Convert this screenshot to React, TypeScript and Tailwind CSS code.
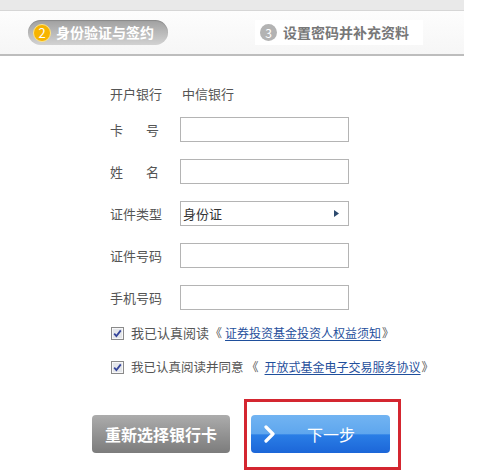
import React from "react";

const FONT = { fontFamily: '"Noto Sans CJK SC", "Noto Sans", sans-serif' };

function Checkbox() {
  return (
    <svg width="13" height="13" viewBox="0 0 13 13" className="shrink-0">
      <rect x="0.5" y="0.5" width="12" height="12" fill="#f2f2f2" stroke="#8a8a8a" />
      <rect x="1.5" y="1.5" width="10" height="10" fill="#e4e6ea" stroke="#ffffff" strokeWidth="0.6" />
      <path d="M3.2 6.6 L5.4 9 L9.8 3.4" fill="none" stroke="#35459a" strokeWidth="1.8" />
    </svg>
  );
}

function Row({ label, children }: { label: React.ReactNode; children: React.ReactNode }) {
  return (
    <div className="flex items-center h-[25px]">
      <div className="w-[70px] text-[13px] text-[#555]">{label}</div>
      {children}
    </div>
  );
}

function Input() {
  return <div className="w-[169px] h-[25px] border border-[#b4b4b4] bg-white" />;
}

export default function App() {
  return (
    <div className="w-[487px] h-[476px] bg-white overflow-hidden" style={FONT}>
      {/* header */}
      <div className="w-[464px]">
        <div className="h-[11px] bg-[#e9e9e9] border-b border-[#d6d6d6]" />
        <div className="h-[45px] flex items-center pl-[28px] bg-gradient-to-b from-[#fdfdfd] to-[#f6f6f6] border-b-2 border-[#bdbdbd]">
          <div className="w-[140px] h-[25px] rounded-full bg-gradient-to-b from-[#a0a0a0] to-[#d2d2d2] flex items-center pl-[5px] shadow-[inset_0_1px_1px_rgba(0,0,0,0.15)]">
            <div className="w-[18px] h-[18px] rounded-full bg-[#f7b400] border border-[#fde58a] flex items-center justify-center text-white text-[13px] leading-none">
              2
            </div>
            <span className="ml-[5px] text-white text-[14px] font-bold">身份验证与签约</span>
          </div>
          <div className="ml-[87px] w-[168px] h-[25px] bg-white flex items-center pl-[5px]">
            <div className="w-[17px] h-[17px] rounded-full bg-[#b3b3b3] flex items-center justify-center text-white text-[12px] leading-none">
              3
            </div>
            <span className="ml-[6px] text-[#777] text-[14px] font-bold">设置密码并补充资料</span>
          </div>
        </div>
      </div>

      {/* form */}
      <div className="pl-[110px] pt-[25px] flex flex-col">
        <Row label="开户银行">
          <span className="text-[13px] text-[#555] ml-[2px]">中信银行</span>
        </Row>
        <div className="mt-[11px] flex flex-col gap-[17px]">
          <Row label={<span className="flex justify-between w-[49px]"><span>卡</span><span>号</span></span>}>
            <Input />
          </Row>
          <Row label={<span className="flex justify-between w-[49px]"><span>姓</span><span>名</span></span>}>
            <Input />
          </Row>
          <Row label="证件类型">
            <div className="w-[169px] h-[25px] border border-[#b4b4b4] bg-white flex items-center justify-between pl-[2px] pr-[9px]">
              <span className="text-[13px] text-[#333]">身份证</span>
              <svg width="5" height="7" viewBox="0 0 5 7">
                <path d="M0 0 L5 3.5 L0 7 Z" fill="#2c4a6e" />
              </svg>
            </div>
          </Row>
          <Row label="证件号码">
            <Input />
          </Row>
          <Row label="手机号码">
            <Input />
          </Row>
        </div>

        <div className="mt-[13px] flex items-center h-[20px] pl-[1px] text-[#555]">
          <Checkbox />
          <span className="ml-[7px] text-[13px]">我已认真阅读</span>
          <span className="ml-[1px] text-[12px] tracking-[-1px]">《</span>
          <a className="ml-[4px] text-[12px] text-[#1f4f9c] underline underline-offset-2">证券投资基金投资人权益须知</a>
          <span className="ml-[1px] text-[12px]">》</span>
        </div>
        <div className="mt-[14px] flex items-center h-[20px] pl-[1px] text-[#555]">
          <Checkbox />
          <span className="ml-[7px] text-[12.5px]">我已认真阅读并同意</span>
          <span className="ml-[3px] text-[12px] tracking-[-1px]">《</span>
          <a className="ml-[7px] text-[12px] text-[#1f4f9c] underline underline-offset-2">开放式基金电子交易服务协议</a>
          <span className="ml-[1px] text-[12px]">》</span>
        </div>
      </div>

      {/* buttons */}
      <div className="mt-[38px] pl-[92px] flex items-center gap-[21px]">
        <button className="w-[138px] h-[38px] rounded-[4px] bg-gradient-to-b from-[#acacac] to-[#7c7c7c] text-white text-[16px] font-bold">
          重新选择银行卡
        </button>
        <div className="relative">
          <button className="w-[139px] h-[38px] rounded-[4px] bg-[linear-gradient(to_bottom,#72b4f2_0%,#5ea6ee_50%,#2a7ee6_52%,#1c66d8_100%)] text-white text-[16px] flex items-center pl-[12px]">
            <svg width="14" height="18" viewBox="0 0 14 18">
              <path d="M3 2 L10 9 L3 16" fill="none" stroke="#ffffff" strokeWidth="3.2" strokeLinecap="round" strokeLinejoin="round" />
            </svg>
            <span className="ml-[30px]">下一步</span>
          </button>
          <div className="absolute left-[-7px] top-[-16px] w-[157px] h-[71px] border-[3px] border-[#d42630] pointer-events-none" />
        </div>
      </div>
    </div>
  );
}
